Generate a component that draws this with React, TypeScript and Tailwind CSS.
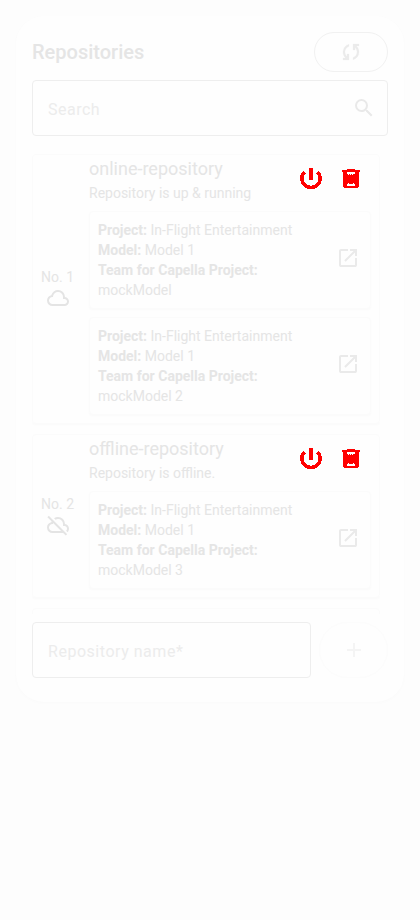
import React from "react";
import { MdSearch, MdAdd } from "react-icons/md";

type Model = { project: string; model: string; name: string };

const icon = "0 -960 960 960";

function SyncIcon() {
  return (
    <svg viewBox={icon} className="size-6 fill-[#ebebeb] stroke-[#ebebeb] stroke-[10]">
      <path d="M160-160v-80h110l-16-14q-52-46-73-105t-21-119q0-111 66.5-197.5T400-790v84q-72 26-116 88.5T240-478q0 45 17 87.5t53 78.5l10 10v-98h80v240H160Zm400-10v-84q72-26 116-88.5T720-482q0-45-17-87.5T650-648l-10-10v98h-80v-240h240v80H690l16 14q49 49 71.5 106.5T800-482q0 111-66.5 197.5T560-170Z" />
    </svg>
  );
}

function OpenIcon() {
  return (
    <svg viewBox={icon} className="mb-[5px] ml-[18px] size-6 fill-[#eaeaea]">
      <path d="M200-120q-33 0-56.500-23.500T120-200v-560q0-33 23.500-56.500T200-840h280v80H200v560h560v-280h80v280q0 33-23.500 56.500T760-120H200Zm188-212-56-56 372-372H560v-80h280v280h-80v-144L388-332Z" />
    </svg>
  );
}

function Cloud({ off }: { off: boolean }) {
  return (
    <svg viewBox={icon} className="-mt-px size-6 fill-[#e4e4e4]">
      {off ? (
        <path d="M792-56 686-160H260q-92 0-156-64T40-380q0-77 47.5-137T210-594q3-8 6-15.500t6-16.500L56-792l56-56 736 736-56 56ZM260-240h346L284-562q-2 11-3 21t-1 21h-20q-58 0-99 41t-41 99q0 58 41 99t99 41ZM864-194l-58-56q17-14 25.500-36.500T840-340q0-42-29-71t-71-29h-60v-80q0-83-58.500-141.500T480-720q-27 0-52 6.500T380-693l-58-58q35-24 74.500-36.500T480-800q117 0 198.500 81.500T760-520q69 8 114.500 59.500T920-340q0 42-15 79.500T864-194Z" />
      ) : (
        <path d="M260-160q-91 0-155.500-63T40-377q0-78 47-139t123-78q25-92 100-149t170-57q117 0 198.500 81.500T760-520q69 8 114.500 59.500T920-340q0 75-52.500 127.500T740-160H260Zm0-80h480q42 0 71-29t29-71q0-42-29-71t-71-29h-60v-80q0-83-58.500-141.500T480-720q-83 0-141.500 58.500T280-520h-20q-58 0-99 41t-41 99q0 58 41 99t99 41Z" />
      )}
    </svg>
  );
}

function Actions() {
  return (
    <div className="flex gap-4 pt-[11px]">
      <svg width="24" height="24" viewBox="0 0 24 24" shapeRendering="crispEdges">
        <path d="M10 2h4v12h-4z" fill="#f00" />
        <path d="M5.500 6A9.100 9.100 0 1 0 18.500 6" fill="none" stroke="#f00" strokeWidth="3.600" />
      </svg>
      <svg width="24" height="24" viewBox="0 0 24 24" shapeRendering="crispEdges">
        <path
          fillRule="evenodd"
          fill="#f00"
          d="M8 3h8v1h5v2h-1v15h-1v1H5v-1H4V6H3V4h5zM8 6v2h1v1h1V8h1v1h1V8h1v1h1V8h2V6zM8 18v2h8v-2h-1v-1h-1v1h-4v-1H9v1z"
        />
      </svg>
    </div>
  );
}

function ModelCard({ m }: { m: Model }) {
  return (
    <div className="flex h-[98px] w-[282px] items-center rounded border border-[#fbfbfb] pl-2 shadow-[0_1px_2px_#fafafa]">
      <div className="w-[220px] text-sm leading-5">
        <div><b>Project:</b> {m.project}</div>
        <div><b>Model:</b> {m.model}</div>
        <div><b>Team for Capella Project:</b></div>
        <div>{m.name}</div>
      </div>
      <OpenIcon />
    </div>
  );
}

function Repository(props: { no: number; name: string; status: string; off: boolean; models: Model[] }) {
  return (
    <div className="flex shrink-0 rounded border border-[#fbfbfb] pb-2 shadow-[0_1px_2px_#fafafa]">
      <div className="flex w-12 flex-col items-center justify-center pt-[6px] pl-px text-sm leading-5">
        <span className="whitespace-nowrap">No. {props.no}</span>
        <Cloud off={props.off} />
      </div>
      <div className="ml-2 flex w-[282px] flex-col">
        <div className="flex h-14 justify-between pr-2">
          <div>
            <div className="h-7 text-lg leading-7">{props.name}</div>
            <div className="text-sm leading-5">{props.status}</div>
          </div>
          <Actions />
        </div>
        <div className="flex flex-col gap-2">
          {props.models.map((m) => <ModelCard key={m.name} m={m} />)}
        </div>
      </div>
    </div>
  );
}

const mock = (name: string): Model => ({ project: "In-Flight Entertainment", model: "Model 1", name });

export default function App() {
  return (
    <div className="h-[920px] w-[420px] bg-[#fdfdfd] p-4 font-['Roboto',sans-serif] text-[#e5e5e5]">
      <div className="flex h-[686px] flex-col rounded-[28px] bg-[#fefefe] p-4 shadow-[0_1px_3px_#fafafa]">
        <div className="flex h-10 items-center justify-between">
          <h2 className="text-xl font-medium">Repositories</h2>
          <button className="flex h-10 w-[74px] items-center justify-center rounded-full border border-[#f1f1f1]">
            <SyncIcon />
          </button>
        </div>
        <div className="mt-2 flex h-14 shrink-0 items-center justify-between rounded border border-[#eeeeee] px-[15px] pt-1 tracking-[0.5px] text-[#ececec]">
          <span>Search</span>
          <MdSearch className="-mr-1 -mt-1 size-6 text-[#e9e9e9]" />
        </div>
        <div className="mt-[18px] flex h-[460px] w-[348px] flex-col gap-2.5 overflow-hidden">
          <Repository no={1} name="online-repository" status="Repository is up & running" off={false} models={[mock("mockModel"), mock("mockModel 2")]} />
          <Repository no={2} name="offline-repository" status="Repository is offline." off={true} models={[mock("mockModel 3")]} />
          <div className="h-16 shrink-0 rounded border border-[#fbfbfb]" />
        </div>
        <div className="mt-2 flex h-14 shrink-0 gap-2">
          <div className="flex w-[279px] items-center rounded border border-[#eeeeee] px-[15px] pt-1 tracking-[0.53px] text-[#ececec]">Repository name*</div>
          <button className="flex w-[69px] items-center justify-center rounded-full border border-[#fcfcfc]">
            <MdAdd className="size-6 text-[#f4f4f4]" />
          </button>
        </div>
      </div>
    </div>
  );
}
